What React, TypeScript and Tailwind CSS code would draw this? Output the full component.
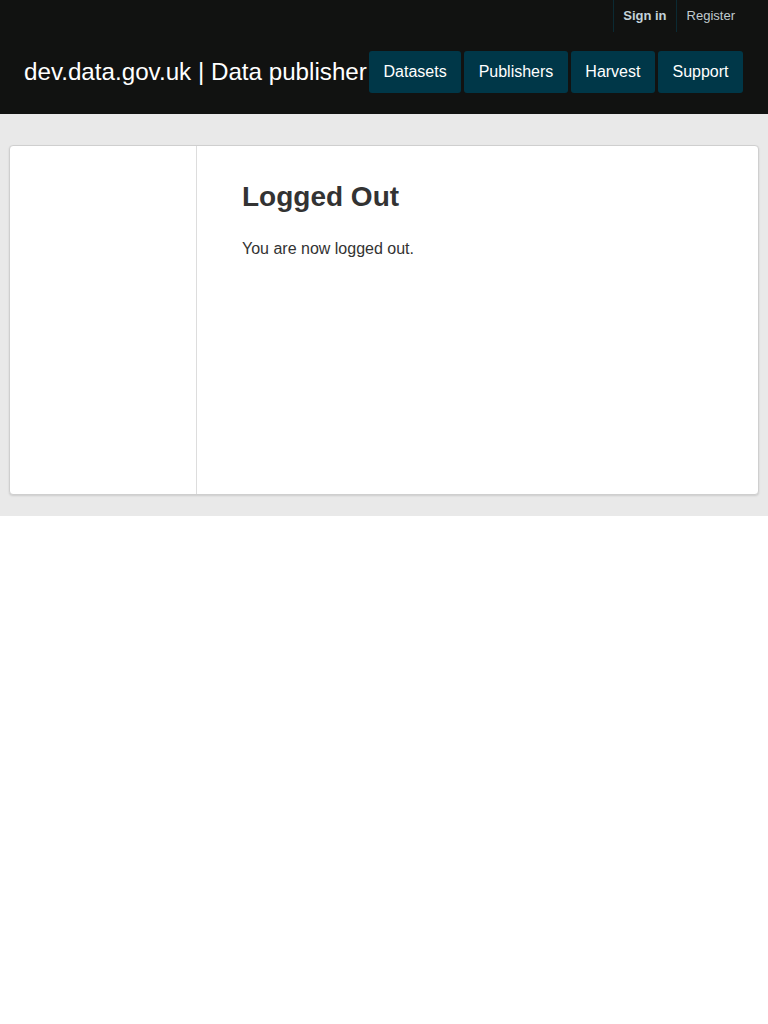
export default function App() {
  return (
    <div className="min-h-[1024px] bg-white font-['Liberation_Sans',Arial,sans-serif]">
      <header className="h-[114px] bg-[#111211] pl-[24px] pr-[25px]">
        <div className="-mr-[2px] flex h-[32px] justify-end">
          <a className="flex items-center border-x border-[#0b2a33] px-[9px] text-[13px] font-bold text-[#c3d3da]">Sign in</a>
          <a className="flex items-center px-[10px] text-[13px] text-[#c0cbcf]">Register</a>
        </div>
        <div className="mt-[19px] flex items-center justify-between">
          <div className="whitespace-nowrap text-[24.2px] leading-[42px] text-white">dev.data.gov.uk | Data publisher</div>
          <nav className="flex gap-[3px]">
            {["Datasets", "Publishers", "Harvest", "Support"].map((t) => (
              <a key={t} className="flex h-[42px] items-center rounded-[3px] bg-[#003748] px-[14.5px] text-[16px] text-white">
                {t}
              </a>
            ))}
          </nav>
        </div>
      </header>
      <main className="bg-[#e9e9e9] px-[9px] pb-[21px] pt-[31px]">
        <div className="flex h-[350px] overflow-hidden rounded-[4px] border border-[#cfcfcf] bg-white shadow-[0_1px_2px_rgba(0,0,0,0.12)]">
          <aside className="w-[187px] shrink-0 border-r border-[#dddddd]" />
          <section className="pl-[45px] pt-[33px] text-[#333333]">
            <h1 className="text-[28px] font-bold leading-[36px]">Logged Out</h1>
            <p className="mt-[22px] text-[16px] leading-[24px]">You are now logged out.</p>
          </section>
        </div>
      </main>
    </div>
  );
}
